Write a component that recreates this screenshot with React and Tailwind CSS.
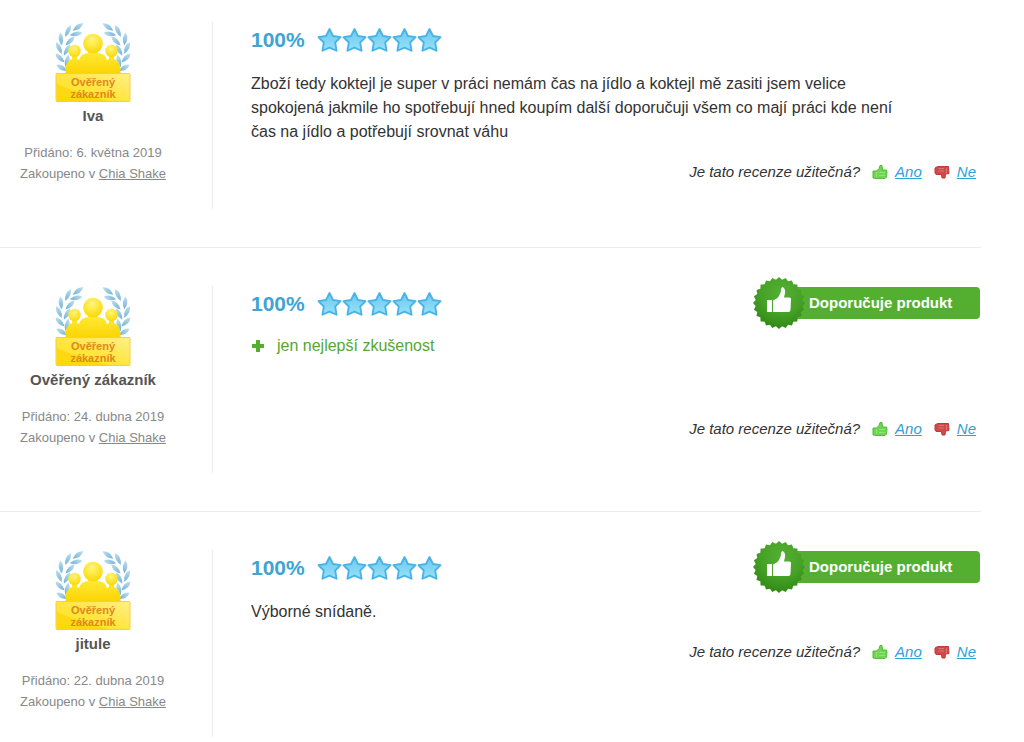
import React from 'react'

const reviews = [
  {
    id: 1,
    author: 'Iva',
    date: '6. května 2019',
    rating: 100,
    text: 'Zboží tedy koktejl je super v práci nemám čas na jídlo a koktejl mě zasiti jsem velice spokojená jakmile ho spotřebují hned koupím další doporučuji všem co mají práci kde není čas na jídlo a potřebují srovnat váhu',
    pros: [],
    recommends: false
  },
  {
    id: 2,
    author: 'Ověřený zákazník',
    date: '24. dubna 2019',
    rating: 100,
    text: '',
    pros: ['jen nejlepší zkušenost'],
    recommends: true
  },
  {
    id: 3,
    author: 'jitule',
    date: '22. dubna 2019',
    rating: 100,
    text: 'Výborné snídaně.',
    pros: [],
    recommends: true
  }
]

// leaves of the left laurel branch: x, y, rotation
const leaves = [
  [24, 5, 55],
  [14, 9, 25],
  [22, 12, 80],
  [7, 17, -5],
  [16, 19, 45],
  [5, 26, -25],
  [13, 28, 30],
  [6, 36, -45],
  [13, 39, 15],
  [8, 46, -60]
]

function Laurel() {
  return leaves.map(([x, y, angle]) => (
    <path
      key={`${x}-${y}`}
      d="M0 -6.5Q4.5 -1 0 6.5Q-4.5 -1 0 -6.5Z"
      transform={`translate(${x} ${y}) rotate(${angle})`}
      fill="url(#leaf)"
    />
  ))
}

function VerifiedBadge() {
  return (
    <svg width="78" height="80" viewBox="0 0 78 80" role="img" aria-label="Ověřený zákazník">
      <defs>
        <linearGradient id="leaf" x1="0" y1="0" x2="0" y2="1">
          <stop offset="0" stopColor="#c4e0ee" />
          <stop offset="1" stopColor="#6db3d6" />
        </linearGradient>
        <linearGradient id="people" x1="0" y1="0" x2="0" y2="1">
          <stop offset="0" stopColor="#ffec3a" />
          <stop offset="1" stopColor="#fbd200" />
        </linearGradient>
        <radialGradient id="head" cx="0.45" cy="0.3" r="0.7">
          <stop offset="0" stopColor="#fff67c" />
          <stop offset="1" stopColor="#fcd800" />
        </radialGradient>
        <linearGradient id="plate" x1="0" y1="1" x2="1" y2="0">
          <stop offset="0" stopColor="#ffe11b" />
          <stop offset="0.5" stopColor="#ffe640" />
          <stop offset="1" stopColor="#fff08a" />
        </linearGradient>
      </defs>
      <Laurel />
      <g transform="translate(78 0) scale(-1 1)">
        <Laurel />
      </g>
      <path d="M11.5 53V47Q12 38.5 18 37V33H23V37L25 38Q26 32 34 31V28H44V31Q52 32 53 38L55 37V33H60V37Q66 38.5 66.5 47V53Z" fill="url(#people)" />
      <circle cx="20.5" cy="29" r="6.2" fill="url(#head)" />
      <circle cx="57.5" cy="29" r="6.2" fill="url(#head)" />
      <circle cx="39" cy="21.5" r="9.8" fill="url(#head)" />
      <rect x="2" y="51.5" width="74" height="28" rx="1" fill="url(#plate)" stroke="#f4cf45" />
      <path d="M3 79V62Q25 72 55 79Z" fill="#ffd000" opacity="0.6" />
      <text x="39" y="63.5" textAnchor="middle" fontFamily="Liberation Sans, sans-serif" fontSize="11" fontWeight="700" fill="#e0871c">Ověřený</text>
      <text x="39" y="76" textAnchor="middle" fontFamily="Liberation Sans, sans-serif" fontSize="11" fontWeight="700" fill="#e0871c">zákazník</text>
    </svg>
  )
}

function Star() {
  return (
    <svg width="25" height="26" viewBox="0 0 25 26" aria-hidden="true">
      <defs>
        <linearGradient id="star" x1="0" y1="0" x2="0" y2="1">
          <stop offset="0" stopColor="#6cc8ef" />
          <stop offset="1" stopColor="#96e2f8" />
        </linearGradient>
      </defs>
      <path d="M12.5 2L16 9L23.6 10.1L18.2 15.5L19.6 23.8L12.5 20.6L5.4 23.8L6.8 15.5L1.4 10.1L9 9Z" fill="url(#star)" stroke="#48b3e6" strokeWidth="1.8" strokeLinejoin="round" />
    </svg>
  )
}

const sealPoints = Array.from({ length: 48 }, (_, i) => {
  const r = i % 2 === 0 ? 26 : 23.5
  const a = (i * Math.PI) / 24
  return `${26 + r * Math.cos(a)},${26 + r * Math.sin(a)}`
}).join(' ')

function Seal() {
  return (
    <svg className="absolute left-0 -top-2.5" width="52" height="52" viewBox="0 0 52 52" aria-hidden="true">
      <defs>
        <radialGradient id="seal" cx="0.55" cy="0.3" r="0.75">
          <stop offset="0" stopColor="#54b031" />
          <stop offset="0.5" stopColor="#47a328" />
          <stop offset="1" stopColor="#2c8412" />
        </radialGradient>
      </defs>
      <polygon points={sealPoints} fill="url(#seal)" />
      <path d="M14 23h5v12h-5z" fill="#fff" />
      <path d="M20 23.5L24.5 21Q28 16.5 28 12.5Q28 10.5 29.5 10Q32.5 11 32 16L31 20.5H36.5Q38 20.5 38 22L37.5 33Q37.3 35 35.5 35H20Z" fill="#fff" />
    </svg>
  )
}

function Recommended() {
  return (
    <div className="relative mt-px flex h-8 w-[227px] shrink-0 items-center">
      <div className="ml-6 flex h-8 grow items-center rounded bg-[#54af31] pl-8 text-[15px] font-bold text-white">
        Doporučuje produkt
      </div>
      <Seal />
    </div>
  )
}

function Thumb({ down }) {
  return (
    <svg width="16" height="16" viewBox="0 0 16 16" aria-hidden="true">
      {down ? (
        <>
          <path d="M1 4L3.5 2.5H14.5L15 9.5L11.5 10L11 14H8L7.5 10.5H2L1 9Z" fill="#cf4a4a" stroke="#c03a3a" strokeLinejoin="round" />
          <path d="M4.5 4.5H10M4.5 7H10M12.5 4V9" stroke="#dd7474" />
        </>
      ) : (
        <>
          <path d="M1 7H4.5L7 4.5L8 1.5H10L10.5 6H14.5L15 8L14.5 13L13 14.5H5L1 14Z" fill="#6fd553" stroke="#4cbf35" strokeLinejoin="round" />
          <path d="M4.5 8V13M7 8.5H13M7 11.5H13" stroke="#93e27a" />
        </>
      )}
    </svg>
  )
}

function Plus() {
  return (
    <svg width="14" height="14" viewBox="0 0 14 14" aria-hidden="true">
      <path d="M5 1h4v4h4v4H9v4H5V9H1V5h4z" fill="#54af31" />
    </svg>
  )
}

function Review({ review }) {
  return (
    <article className="flex border-b border-[#ececec] py-[38px] first:pt-[22px]">
      <aside className="flex h-[187px] w-[213px] shrink-0 flex-col border-r border-[#ececec] pr-[26px] text-center">
        <div className="flex justify-center">
          <VerifiedBadge />
        </div>
        <h3 className="text-[15px] leading-7 font-bold text-[#555]">{review.author}</h3>
        <div className="mt-3 text-[13px] leading-[21px] text-[#888]">
          <p>Přidáno: {review.date}</p>
          <p>
            Zakoupeno v <a href="#shop" className="underline">Chia Shake</a>
          </p>
        </div>
      </aside>

      <div className="flex min-w-0 grow flex-col pr-px pl-[38px]">
        <div className="flex h-9 items-start justify-between">
          <div className="flex h-9 items-center gap-3">
            <strong className="text-[21px] font-bold text-[#40a4d1]">{review.rating}%</strong>
            <div className="flex">
              {[1, 2, 3, 4, 5].map((n) => (
                <Star key={n} />
              ))}
            </div>
          </div>
          {review.recommends && <Recommended />}
        </div>

        {review.text && (
          <p className="mt-[14px] max-w-[660px] text-base leading-6 text-[#333]">{review.text}</p>
        )}
        {review.pros.length > 0 && (
          <ul className="mt-3 mb-[43px] text-base leading-6 text-[#54a82f]">
            {review.pros.map((item) => (
              <li key={item} className="flex items-center gap-3">
                <Plus />
                {item}
              </li>
            ))}
          </ul>
        )}

        <div className="mt-4 flex items-center justify-end pr-1 text-[15px] leading-6 text-[#333] italic">
          <span className="mr-3">Je tato recenze užitečná?</span>
          <button type="button" className="mr-3 flex cursor-pointer items-center gap-[7px] text-[#2fa1d6] italic underline">
            <Thumb />
            Ano
          </button>
          <button type="button" className="flex cursor-pointer items-center gap-[7px] text-[#2fa1d6] italic underline">
            <Thumb down />
            Ne
          </button>
        </div>
      </div>
    </article>
  )
}

export default function App() {
  return (
    <main className="mr-[43px] bg-white font-['Liberation_Sans',Arial,sans-serif]">
      {reviews.map((review) => (
        <Review key={review.id} review={review} />
      ))}
    </main>
  )
}
